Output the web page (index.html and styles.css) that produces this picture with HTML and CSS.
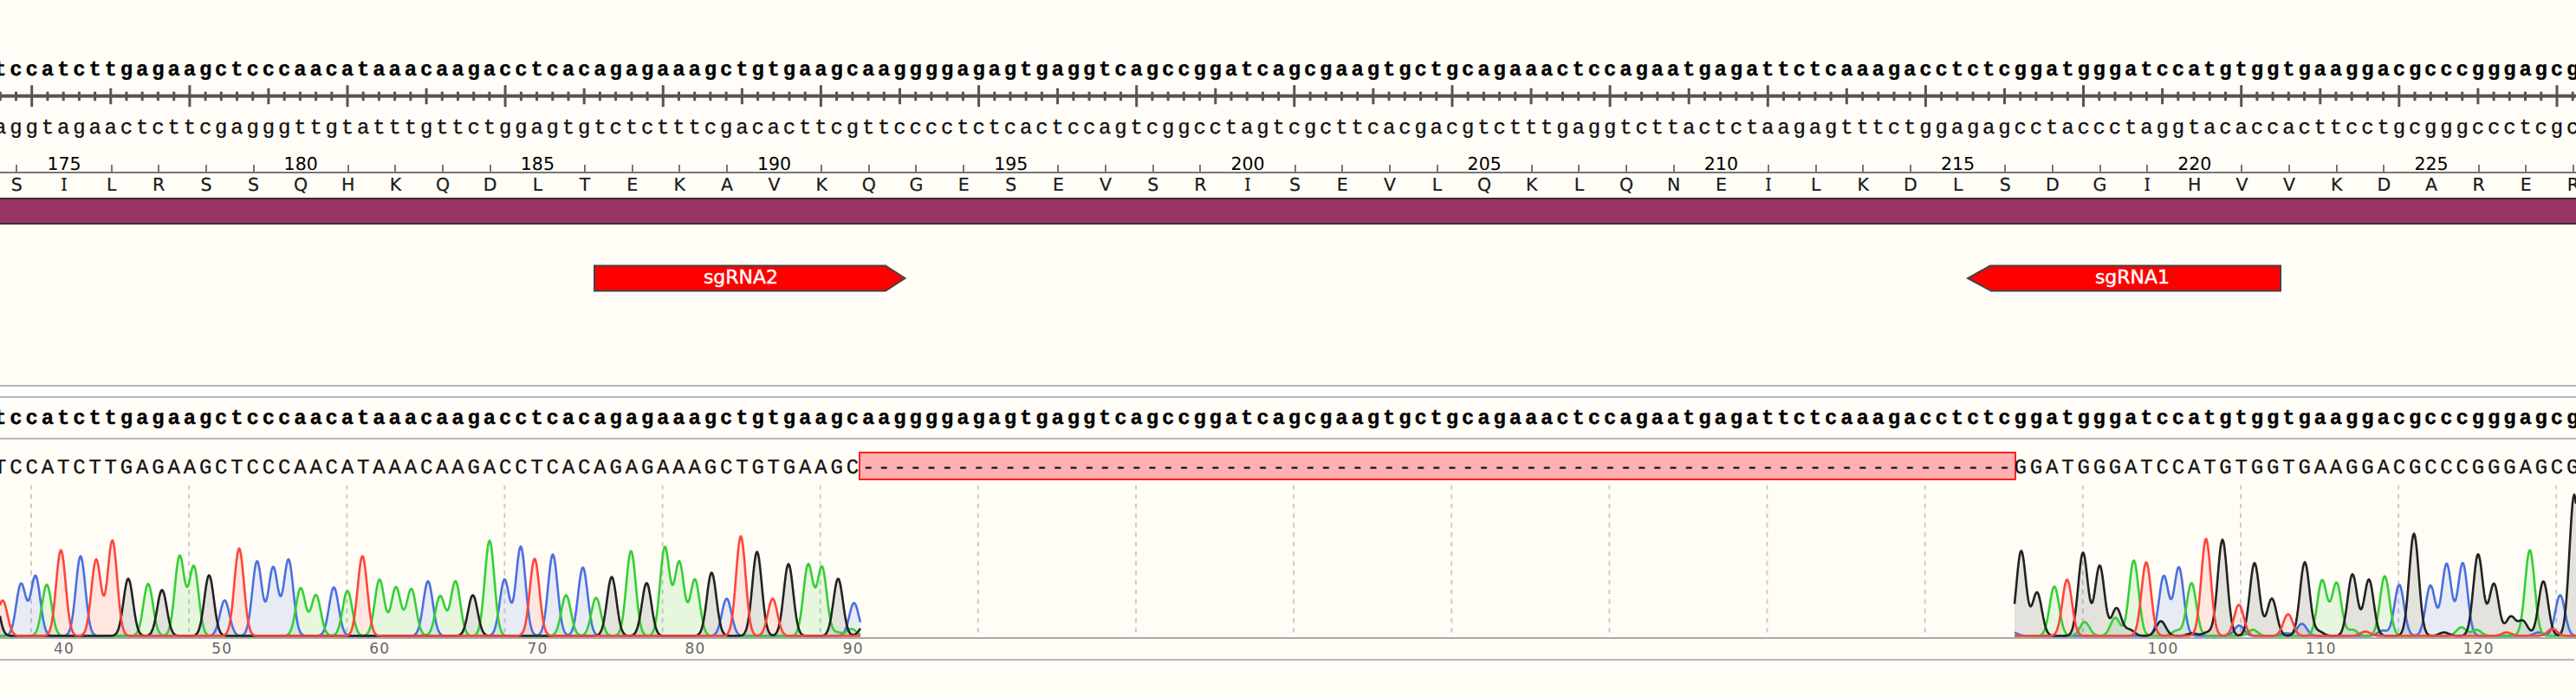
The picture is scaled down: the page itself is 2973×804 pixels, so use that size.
FILE: index.html
```html
<!DOCTYPE html>
<html lang="en">
<head>
<meta charset="UTF-8">
<meta name="viewport" content="width=device-width, initial-scale=1.0">
<title>Sequence alignment</title>
<link rel="stylesheet" href="styles.css">
</head>
<body>
<div class="map">
    <div class="seq bold">tccatcttgagaagctcccaacataaacaagacctcacagagaaagctgtgaagcaaggggagagtgaggtcagccggatcagcgaagtgctgcagaaactccagaatgagattctcaaagacctctcggatgggatccatgtggtgaaggacgcccgggagcg</div>
    <svg class="ruler" id="ruler" width="2973" height="32"></svg>
    <div class="seq">aggtagaactcttcgagggttgtatttgttctggagtgtctctttcgacacttcgttcccctctcactccagtcggcctagtcgcttcacgacgtctttgaggtcttactctaagagtttctggagagcctaccctaggtacaccacttcctgcgggccctcgc</div>
    <div class="aa-numbers" id="aaNumbers"></div>
    <div class="aa-letters" id="aaLetters"></div>
    <div class="cds"></div>
    <svg class="guides" width="2973" height="34">
        <path class="guide" d="M686 1.5H1022L1044.5 16L1022 30.5H686Z"/>
        <text class="guide-label" x="855" y="22">sgRNA2</text>
        <path class="guide" d="M2632 1.5H2297L2271 16L2298 30.5H2632Z"/>
        <text class="guide-label" x="2461" y="22">sgRNA1</text>
    </svg>
</div>

<div class="alignment">
    <div class="gutter"></div>
    <div class="reference">
        <div class="seq bold">tccatcttgagaagctcccaacataaacaagacctcacagagaaagctgtgaagcaaggggagagtgaggtcagccggatcagcgaagtgctgcagaaactccagaatgagattctcaaagacctctcggatgggatccatgtggtgaaggacgcccgggagcg</div>
    </div>
    <div class="read">
        <div class="seq"><span>TCCATCTTGAGAAGCTCCCAACATAAACAAGACCTCACAGAGAAAGCTGTGAAGC</span><span class="deletion">-------------------------------------------------------------------------</span><span>GGATGGGATCCATGTGGTGAAGGACGCCCGGGAGCG</span></div>
        <svg class="trace" id="trace" width="2973" height="200"></svg>
    </div>
</div>

<script src="script.js"></script>
</body>
</html>
```
FILE: styles.css
```css
body {
    margin: 0;
    width: 2973px;
    height: 804px;
    overflow: hidden;
    background-color: #fffdf6;
    color: #000;
    font-family: "DejaVu Sans", Verdana, sans-serif;
}

svg {
    display: block;
}

.map {
    height: 376px;
    padding-top: 68px;
}

.seq {
    display: flex;
    height: 28px;
    margin-left: -6.9px;
    font-family: "Liberation Mono", "Courier New", monospace;
    font-size: 24px;
    line-height: 28px;
    letter-spacing: 3.812px;
    white-space: nowrap;
    text-rendering: geometricPrecision;
    -webkit-text-stroke: 0.3px;
    color: #111;
}

.seq.bold {
    font-weight: bold;
    color: #000;
}

.ruler {
    margin-top: -1px;
    margin-bottom: 8px;
}

.ruler path {
    stroke: #555;
    stroke-width: 3;
}

.ruler .axis {
    stroke-width: 4;
}

.aa-numbers,
.aa-letters {
    display: flex;
    width: 3060px;
    font-size: 20.5px;
    text-rendering: geometricPrecision;
}

.aa-numbers {
    height: 23px;
    margin-top: 12px;
    border-bottom: 2px solid #777;
    line-height: 28px;
}

.aa-letters {
    height: 28px;
    line-height: 27px;
    color: #1a1a1a;
    -webkit-text-stroke: 0.2px;
}

.aa-numbers div,
.aa-letters div {
    display: flex;
    flex: none;
    justify-content: center;
    width: 54.642px;
    margin-left: -8px;
    margin-right: 8px;
}

.aa-letters .serif-i {
    font-family: "Noto Sans", sans-serif;
}

.tick {
    align-self: flex-end;
    width: 2px;
    height: 8px;
    background-color: #777;
}

.cds {
    height: 27px;
    margin-bottom: 46px;
    border-top: 2px solid #333;
    border-bottom: 2px solid #333;
    background-color: #993366;
}

.guide {
    fill: #f00;
    stroke: #444;
    stroke-width: 2;
}

.guide-label {
    fill: #fff;
    stroke: #fff;
    stroke-width: 0.4;
    font-size: 22px;
    text-anchor: middle;
}

.alignment {
    width: 2973px;
    border-top: 2px solid #b8b8b8;
}

.gutter {
    height: 11px;
    background-color: #fff;
}

.reference {
    height: 35px;
    padding-top: 11px;
    border-top: 2px solid #b8b8b8;
    border-bottom: 2px solid #b8b8b8;
}

.read {
    width: 2971px;
    padding-top: 20px;
    border-bottom: 2px solid #b8b8b8;
}

.deletion {
    height: 29px;
    margin: -6px -2px 0 -3.6px;
    padding-left: 1.6px;
    border: 2px solid #ff2222;
    background-color: #ffb0b0;
    line-height: 36px;
}

.trace {
    margin-top: 5px;
    overflow: hidden;
}

.trace text {
    fill: #666;
    font-size: 17px;
    letter-spacing: 1.2px;
    text-anchor: middle;
}

.grid {
    stroke: #ccc;
    stroke-width: 2;
    stroke-dasharray: 5.5 5.5;
}

.baseline {
    stroke: #aaa;
    stroke-width: 2;
}

.curve {
    fill: none;
    stroke-width: 2.6;
    stroke-linejoin: round;
}
```
FILE: script.js
```js
var STEP = 18.214;
var ORIGIN = 0.3;

function baseX(i) {
    return ORIGIN + i * STEP;
}

// Ruler between the strands
function drawRuler() {
    var d = "";
    for (var i = 0; i < 164; i++) {
        var up = 5, down = 5.5;
        if (i % 10 === 2) {
            up = 12.5;
            down = 12.5;
        } else if (i % 10 === 7) {
            up = 9;
            down = 9.5;
        }
        d += "M" + baseX(i).toFixed(1) + " " + (15.7 - up) + "V" + (15.7 + down);
    }
    document.getElementById("ruler").innerHTML =
        '<path class="axis" d="M0 15.7H2973"/><path d="' + d + '"/>';
}

// Translation, one letter per codon, numbered every 5
function drawProtein() {
    var protein = "SILRSSQHKQDLTEKAVKQGESEVSRISEVLQKLQNEILKDLSDGIHVVKDARER";
    var numbers = "", letters = "";
    for (var i = 0; i < protein.length; i++) {
        var n = 174 + i;
        numbers += n % 5 === 0 ? "<div>" + n + "</div>" : '<div><span class="tick"></span></div>';
        letters += protein[i] === "I" ? '<div class="serif-i">I</div>' : "<div>" + protein[i] + "</div>";
    }
    document.getElementById("aaNumbers").innerHTML = numbers;
    document.getElementById("aaLetters").innerHTML = letters;
}

// Peaks: [x, height]
var channels = [
    {
        color: "#4a6fe3",
        peaks: [[24.3,60],[41,69],[93,92],[259.3,41],[296.7,86],[315.3,79],[333,88],[385.3,56],[494,63],
            [582.3,65],[601,103],[638,94],[672.7,79],[838.7,43],[985.7,38],
            [2323,4],[2497.3,69],[2514.7,79],[2584.3,12],[2638,3],[2656.7,14],[2750,6],[2769,59],[2805,58],[2823.7,83],
            [2842.3,84],[2930,4],[2954.7,47]]
    },
    {
        color: "#35cf35",
        peaks: [[54,59],[171,60],[207.3,92],[223.7,80],[347,55],[364.7,47],[401,52],[438,65],[457,56],[474.7,54],
            [508,46],[525.7,63],[565,110],[653.3,47],[688,44],[728.3,98],[767.3,102],[784,85],[802,65],
            [932.7,82],[948.7,79],[966,4],[982.7,8],
            [2371,57],[2406,16],[2441.3,21],[2462.7,87],[2512,6],[2529.3,61],[2600,7],[2680,64],[2696.7,61],
            [2715,7],[2752.3,69],[2840.7,10],[2858.3,7],[2919.7,99]]
    },
    {
        color: "#222",
        peaks: [[-7,52],[148,66],[187,53],[241.3,70],[545.7,47],[706,68],[746.3,61],[821.3,73],[873.7,97],
            [910,83],[967.3,66],[998,13],
            [2332.7,98],[2351,50],[2404,96],[2423.3,81],[2442.7,32],[2457.7,7],[2494,17],[2530,3],[2548,4],
            [2565,111],[2602,84],[2622,43],[2660,85],[2676,5],[2715,71],[2734,65],[2786,118],[2820.7,4],
            [2860,94],[2878.3,60],[2897.7,22],[2911.7,17],[2935.3,63],[2971,163]]
    },
    {
        color: "#ff453a",
        peaks: [[3,41],[70.3,99],[111,88],[129.7,110],[276,101],[418.3,92],[617,89],[855,115],[891.7,43],
            [2385.7,65],[2477,85],[2546,112],[2584,36],[2640.7,25],[2730,5],[2893,4],[2945.7,8]]
    }
];

var BASE_Y = 173.5;

function signal(peaks, x) {
    var sum = 0;
    for (var i = 0; i < peaks.length; i++) {
        var t = (x - peaks[i][0]) / 5.5;
        sum += peaks[i][1] * Math.exp(-t * t / 2);
    }
    return sum;
}

function curve(peaks, from, to) {
    var points = [];
    for (var x = from; x <= to; x++) {
        points.push(x + " " + (BASE_Y - signal(peaks, x)).toFixed(1));
    }
    return points.join("L");
}

function drawTrace() {
    var html = '<path class="baseline" d="M0 176H2973"/>';
    for (var g = 0; g < 17; g++) {
        var gx = (36 + g * STEP * 10).toFixed(1);
        html += '<path class="grid" d="M' + gx + ' -1V175"/>';
    }
    [[0, 993], [2325, 2973]].forEach(function(range) {
        channels.forEach(function(channel) {
            html += '<path fill="' + channel.color + '" fill-opacity="0.12" d="M' + range[0] + " " + BASE_Y + "L" +
                curve(channel.peaks, range[0], range[1]) + "L" + range[1] + " " + BASE_Y + 'Z"/>';
        });
        channels.forEach(function(channel) {
            html += '<path class="curve" stroke="' + channel.color + '" d="M' +
                curve(channel.peaks, range[0], range[1]) + '"/>';
        });
    });
    var labels = [[4, 40], [14, 50], [24, 60], [34, 70], [44, 80], [54, 90], [137, 100], [147, 110], [157, 120]];
    labels.forEach(function(label) {
        html += '<text x="' + (baseX(label[0]) + 0.9).toFixed(1) + '" y="193.5">' + label[1] + "</text>";
    });
    document.getElementById("trace").innerHTML = html;
}

drawRuler();
drawProtein();
drawTrace();
```
